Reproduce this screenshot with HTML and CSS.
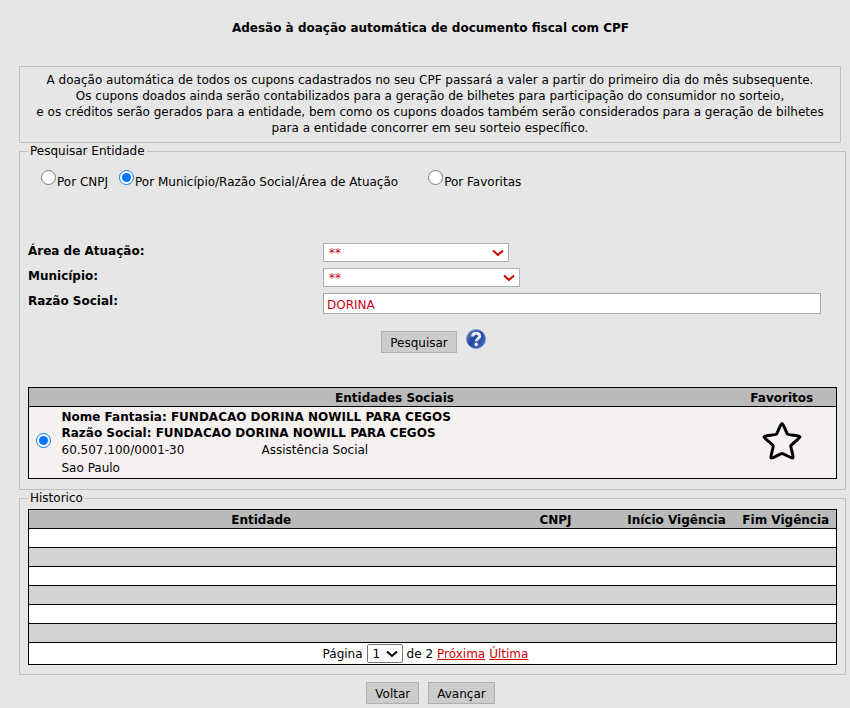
FILE: index.html
```html
<!DOCTYPE html>
<html lang="pt-BR">
<head>
    <meta charset="UTF-8">
    <meta name="viewport" content="width=device-width, initial-scale=1.0">
    <title>Adesão à doação automática</title>
    <link rel="stylesheet" href="styles.css">
</head>
<body>
    <h1>Adesão à doação automática de documento fiscal com CPF</h1>

    <p class="info">
        A doação automática de todos os cupons cadastrados no seu CPF passará a valer a partir do primeiro dia do mês subsequente.<br>
        Os cupons doados ainda serão contabilizados para a geração de bilhetes para participação do consumidor no sorteio,<br>
        e os créditos serão gerados para a entidade, bem como os cupons doados também serão considerados para a geração de bilhetes<br>
        para a entidade concorrer em seu sorteio específico.
    </p>

    <form>
        <fieldset class="search">
            <legend>Pesquisar Entidade</legend>
            <div class="options">
                <span class="option"><input type="radio" name="tipo" id="cnpj"><label for="cnpj">Por CNPJ</label></span>
                <span class="option"><input type="radio" name="tipo" id="municipio-razao" checked><label for="municipio-razao">Por Município/Razão Social/Área de Atuação</label></span>
                <span class="option favorites"><input type="radio" name="tipo" id="favoritas"><label for="favoritas">Por Favoritas</label></span>
            </div>

            <div class="fields">
                <label for="area">Área de Atuação:</label>
                <div class="select area">
                    <select id="area"><option>**</option></select>
                    <svg viewBox="0 0 12 8"><path d="M1 1.5l5 4.5 5-4.5"/></svg>
                </div>
                <label for="municipio">Município:</label>
                <div class="select city">
                    <select id="municipio"><option>**</option></select>
                    <svg viewBox="0 0 12 8"><path d="M1 1.5l5 4.5 5-4.5"/></svg>
                </div>
                <label for="razao">Razão Social:</label>
                <input type="text" id="razao" value="DORINA">
            </div>

            <div class="search-actions">
                <button type="button" class="button">Pesquisar</button>
                <a href="#" class="help" aria-label="Ajuda">
                    <svg viewBox="0 0 20 20">
                        <defs>
                            <linearGradient id="blue" x1="0" y1="0" x2="1" y2="1">
                                <stop offset="0" stop-color="#6f8fcb"/>
                                <stop offset=".45" stop-color="#2345a0"/>
                                <stop offset="1" stop-color="#3f6cd0"/>
                            </linearGradient>
                        </defs>
                        <circle cx="10" cy="10" r="9.5" fill="url(#blue)" stroke="#7f93c4"/>
                        <path d="M6.6 7.6C6.6 5.300 8 4.200 10.100 4.200s3.600 1.100 3.600 3c0 2.300-3.400 2.500-3.400 5" fill="none" stroke="#e9eaf2" stroke-width="3"/>
                        <circle cx="10.2" cy="15.4" r="1.8" fill="#e9eaf2"/>
                    </svg>
                </a>
            </div>

            <table class="entities">
                <thead>
                    <tr><th></th><th>Entidades Sociais</th><th class="favorite">Favoritos</th></tr>
                </thead>
                <tbody>
                    <tr>
                        <td class="pick"><input type="radio" name="entidade" aria-label="FUNDACAO DORINA NOWILL PARA CEGOS" checked></td>
                        <td>
                            <b>Nome Fantasia: FUNDACAO DORINA NOWILL PARA CEGOS</b>
                            <b>Razão Social: FUNDACAO DORINA NOWILL PARA CEGOS</b>
                            <div class="details">
                                <span>60.507.100/0001-30</span><span>Assistência Social</span>
                                <span>Sao Paulo</span>
                            </div>
                        </td>
                        <td class="favorite">
                            <button type="button" class="star" aria-label="Favoritar">
                                <svg viewBox="0 0 40 40"><path d="M20 2.5c1.200 0 5 10.200 5.600 10.800s12.400 1 12.400 2.500-8.800 7.700-9.200 9 3.200 11.300 2.200 12.200S21.500 32.500 20 32.500 9.800 38 9 37s2.600-11 2.200-12.200S2 17.300 2 15.800s11.800-1.900 12.400-2.500S18.800 2.500 20 2.500z"/></svg>
                            </button>
                        </td>
                    </tr>
                </tbody>
            </table>
        </fieldset>

        <fieldset class="history-box">
            <legend>Historico</legend>
            <table class="history">
                <thead>
                    <tr><th>Entidade</th><th class="col-cnpj">CNPJ</th><th class="col-start">Início Vigência</th><th class="col-end">Fim Vigência</th></tr>
                </thead>
                <tbody>
                    <tr><td colspan="4"></td></tr>
                    <tr><td colspan="4"></td></tr>
                    <tr><td colspan="4"></td></tr>
                    <tr><td colspan="4"></td></tr>
                    <tr><td colspan="4"></td></tr>
                    <tr><td colspan="4"></td></tr>
                </tbody>
                <tfoot>
                    <tr>
                        <td colspan="4">
                            <div class="pager">
                                <label for="pagina">Página</label>
                                <div class="select page">
                                    <select id="pagina"><option>1</option><option>2</option></select>
                                    <svg viewBox="0 0 12 8"><path d="M1 1.5l5 4.5 5-4.5"/></svg>
                                </div>
                                <span>de 2</span>
                                <a href="#">Próxima</a>
                                <a href="#">Última</a>
                            </div>
                        </td>
                    </tr>
                </tfoot>
            </table>
        </fieldset>

        <div class="actions">
            <button type="button" class="button">Voltar</button>
            <button type="button" class="button">Avançar</button>
        </div>
    </form>
</body>
</html>
```

FILE: styles.css
```css
* {
    box-sizing: border-box;
}
body {
    margin: 0;
    padding: 20px 4px 4px 19px;
    background-color: #e6e6e6;
    color: #000;
    font-family: Verdana, "DejaVu Sans", sans-serif;
    font-size: 12px;
    line-height: 16px;
}
h1 {
    margin: 0 4px 30px 0;
    font-size: 12px;
    text-align: center;
}
.info {
    margin: 0 5px 0 0;
    padding: 5px 0 6px;
    border: 1px solid #bfbfbf;
    text-align: center;
}
fieldset {
    min-width: 0;
    margin: 0;
    border: 1px solid #c0c0c0;
    padding: 0 8px;
}
legend {
    padding: 0 2px;
}
input, select, button {
    margin: 0;
    font: inherit;
}
input[type="radio"] {
    width: 15px;
    height: 15px;
}
.search {
    padding-bottom: 10px;
}
.options {
    display: flex;
    gap: 11px;
    padding: 11px 0 0 13px;
}
.option {
    display: flex;
    gap: 1px;
}
.option label {
    padding-top: 4px;
}
.favorites {
    margin-left: 19px;
}
.fields {
    display: grid;
    grid-template-columns: 295px 1fr;
    row-gap: 6px;
    margin-top: 53px;
    padding-right: 16px;
}
.fields label {
    font-weight: bold;
}
.fields input {
    height: 21px;
    padding: 2px 3px 0;
    border: 1px solid #a9a9a9;
    background-color: #fff;
    color: #cc0018;
}
.select {
    position: relative;
    height: 19px;
}
.select select {
    display: block;
    width: 100%;
    height: 100%;
    padding: 0 5px;
    border: 1px solid #b0b0b0;
    border-radius: 0;
    background-color: #fff;
    color: #cc0018;
    appearance: none;
}
.select svg {
    position: absolute;
    top: 6px;
    right: 5px;
    width: 12px;
    height: 8px;
    fill: none;
    stroke: #cc0000;
    stroke-width: 2;
    pointer-events: none;
}
.area {
    width: 186px;
}
.city {
    width: 197px;
}
.button {
    height: 22px;
    padding: 2px 8px 0;
    border: 1px solid #b0b0b0;
    background-color: #cccccc;
    color: #000;
}
.search-actions {
    display: flex;
    justify-content: center;
    align-items: flex-end;
    gap: 9px;
    margin: 15px 0 34px;
    padding-left: 2px;
}
.help {
    width: 20px;
    height: 24px;
}
.help svg {
    display: block;
}
table {
    width: 100%;
    border-collapse: collapse;
    border: 1px solid #000;
}
th {
    height: 19px;
    padding: 1px 0 0;
    border-bottom: 1px solid #000;
    background-color: #bababa;
}
td {
    padding: 0;
}
.entities tbody {
    background-color: #f5f1f0;
}
.entities td {
    padding: 2px 0 1px;
}
.entities .pick {
    width: 33px;
    padding: 0 0 4px 7px;
}
.pick input {
    display: block;
}
.entities b {
    display: block;
}
.details {
    display: grid;
    grid-template-columns: 200px 1fr;
    line-height: 18px;
}
.entities .favorite {
    width: 109px;
    text-align: center;
}
.star {
    width: 40px;
    height: 40px;
    padding: 0;
    border: 0;
    background: none;
}
.star svg {
    display: block;
    fill: none;
    stroke: #000;
    stroke-width: 3;
    stroke-linejoin: round;
}
.history-box {
    padding-bottom: 9px;
}
.history {
    margin-top: 3px;
}
.history .col-cnpj {
    width: 124px;
}
.history .col-start {
    width: 118px;
}
.history .col-end {
    width: 101px;
}
.history tbody td {
    height: 19px;
    border-bottom: 1px solid #000;
    background-color: #fff;
}
.history tbody tr:nth-child(even) td {
    background-color: #d2d4d3;
}
.history tfoot {
    background-color: #fff;
}
.pager {
    display: flex;
    justify-content: center;
    align-items: center;
    gap: 4px;
    height: 21px;
    padding-right: 14px;
}
.page {
    width: 36px;
}
.page select {
    border-color: #767676;
    border-radius: 2px;
    color: #000;
}
.page svg {
    stroke: #000;
}
.pager a {
    color: #cc0000;
}
.actions {
    display: flex;
    justify-content: center;
    gap: 9px;
    margin-top: 7px;
    padding-right: 4px;
}
```
